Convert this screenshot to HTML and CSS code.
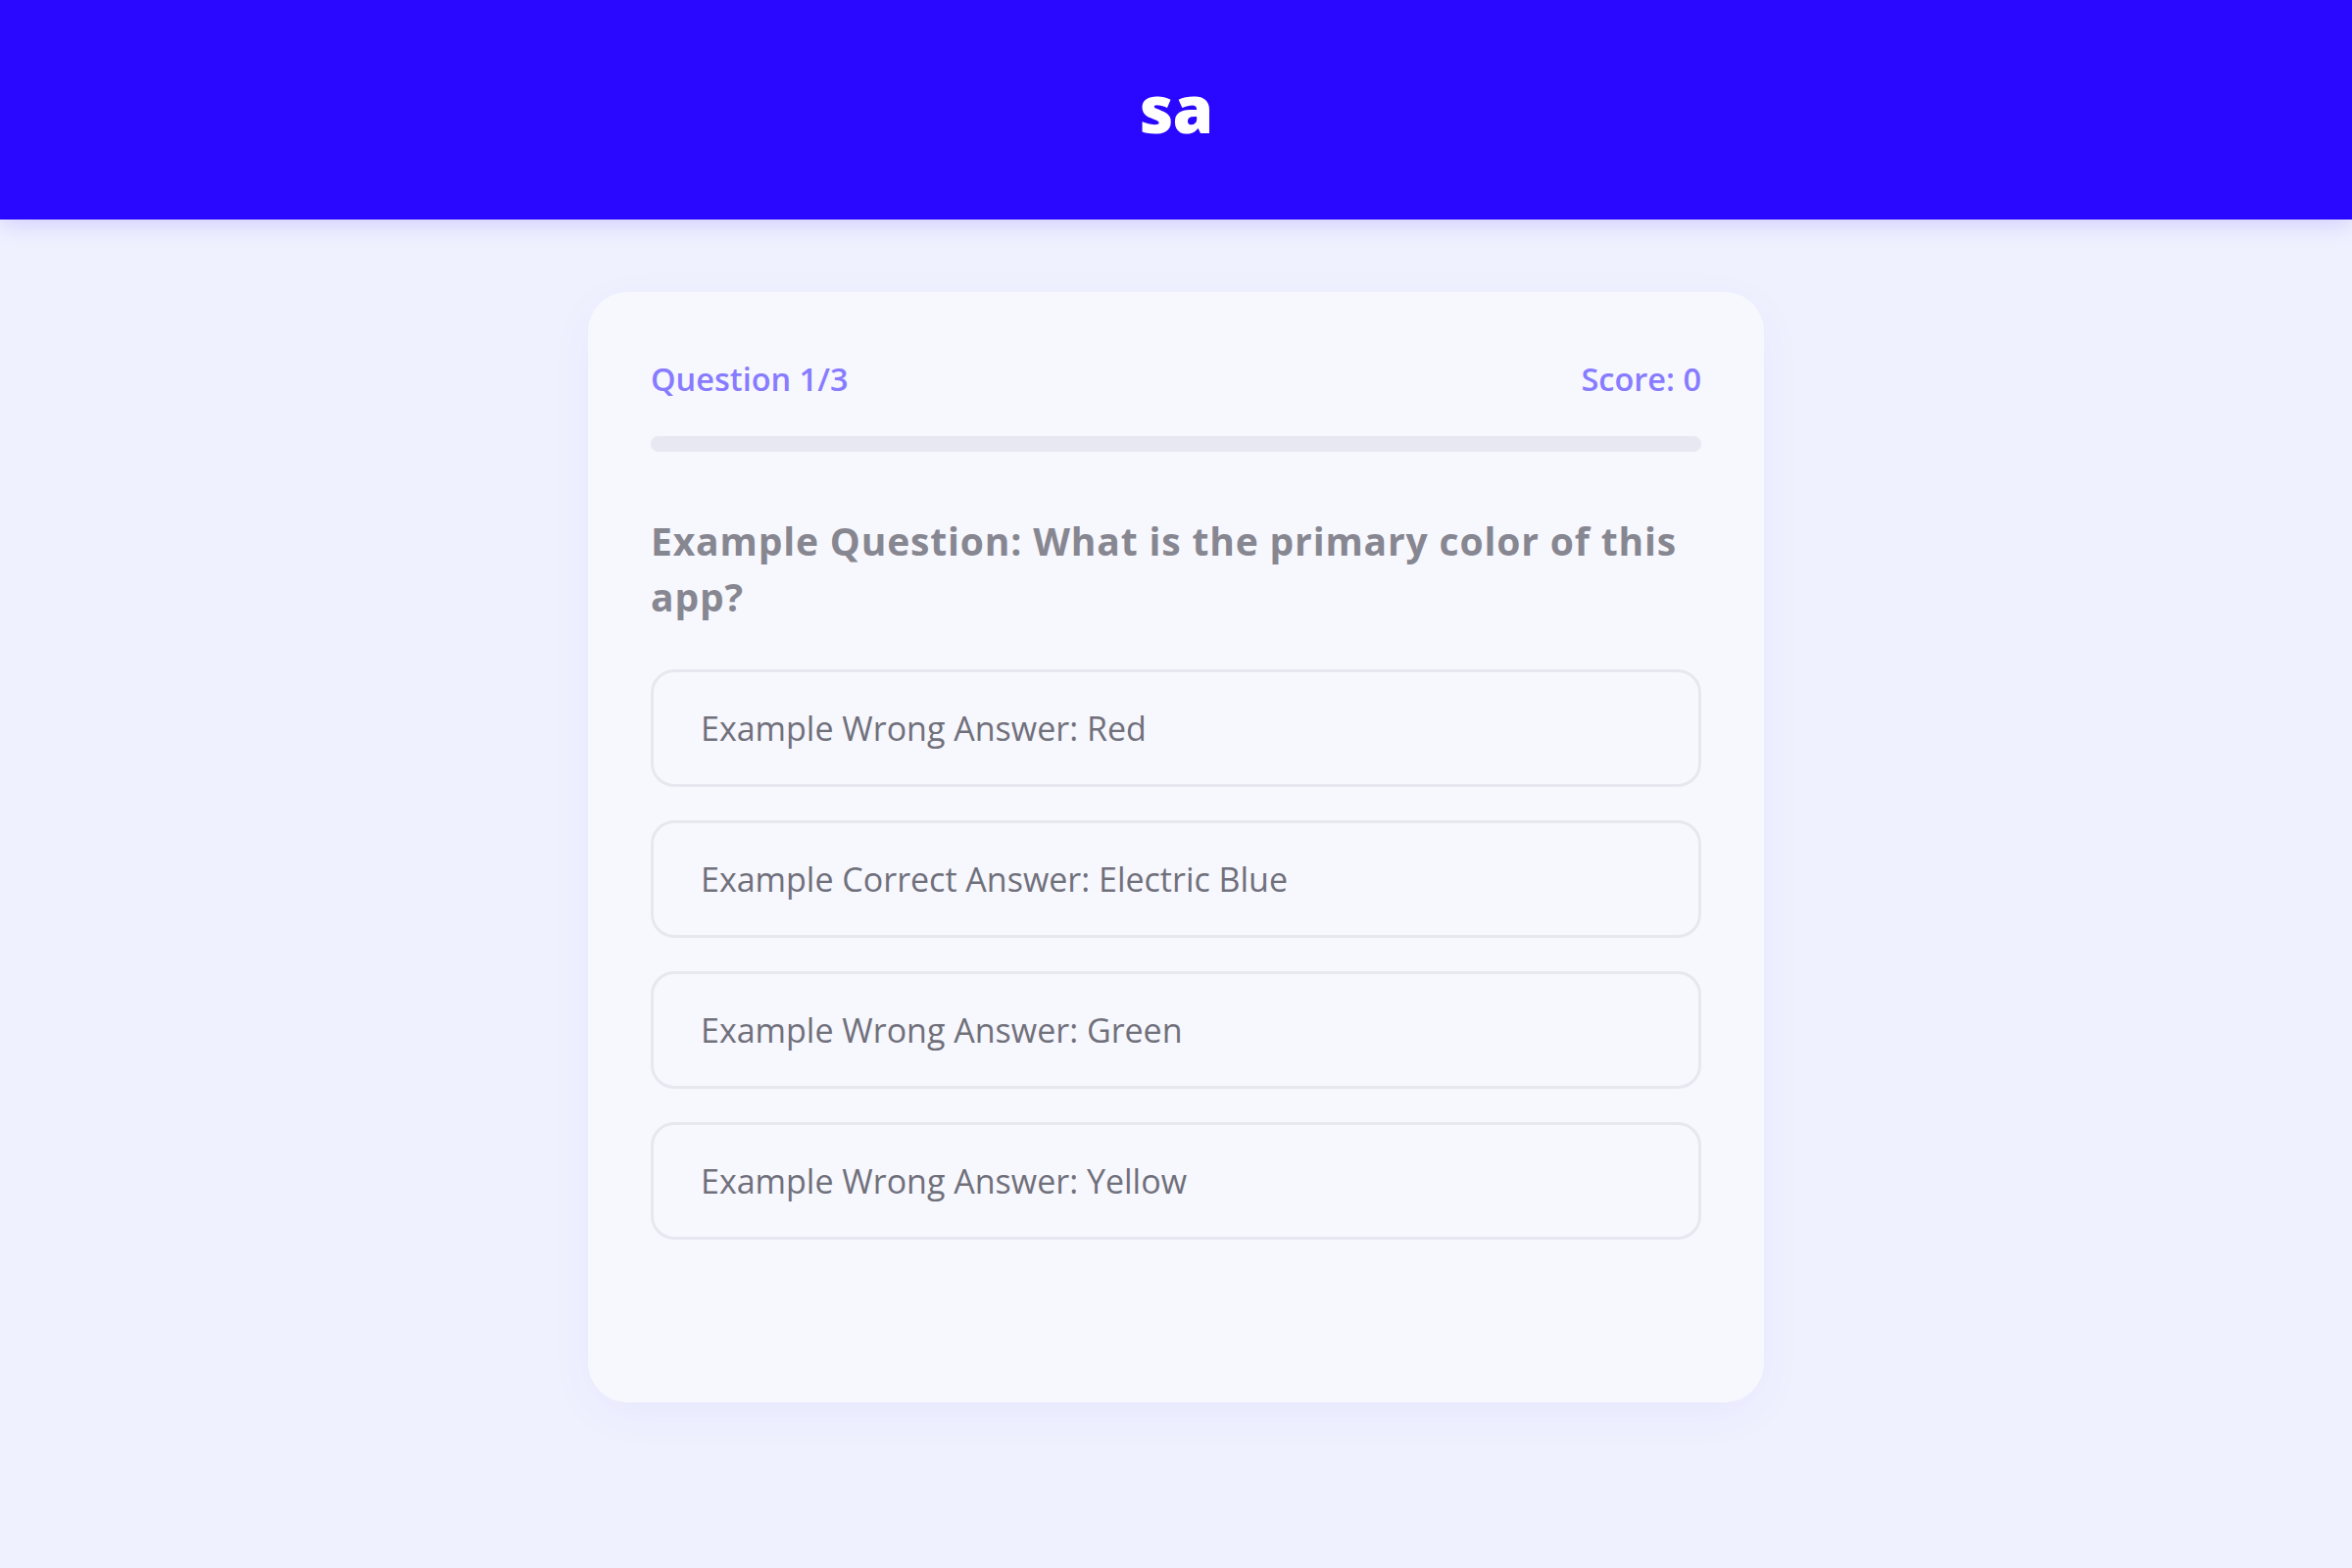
FILE: index.html
```html
<!DOCTYPE html>
<html lang="en">
<head>
<meta charset="utf-8">
<title>sa</title>
<link rel="stylesheet" href="styles.css">
</head>
<body>
<header class="topbar">
  <div class="logo">sa</div>
</header>
<main class="page">
  <section class="quiz-card">
    <div class="quiz-meta">
      <span class="meta-item">Question 1/3</span>
      <span class="meta-item">Score: 0</span>
    </div>
    <div class="progress"><div class="progress-fill" style="width: 0%"></div></div>
    <h2 class="question">Example Question: What is the primary color of this app?</h2>
    <div class="answers">
      <button class="answer">Example Wrong Answer: Red</button>
      <button class="answer">Example Correct Answer: Electric Blue</button>
      <button class="answer">Example Wrong Answer: Green</button>
      <button class="answer">Example Wrong Answer: Yellow</button>
    </div>
  </section>
</main>
</body>
</html>
```

FILE: styles.css
```css
* {
  box-sizing: border-box;
}

html, body {
  margin: 0;
  padding: 0;
}

body {
  background: #f0f1fe;
  font-family: "Open Sans", "Noto Sans", sans-serif;
  min-height: 1600px;
}

.topbar {
  height: 224px;
  background: #2a07ff;
  display: flex;
  align-items: center;
  justify-content: center;
  box-shadow: 0 4px 24px rgba(42, 7, 255, 0.16);
  position: relative;
  z-index: 1;
}

.logo {
  color: #ffffff;
  font-family: "Open Sans", sans-serif;
  font-weight: 800;
  font-size: 67px;
  line-height: 1;
  letter-spacing: -1px;
  padding-bottom: 4px;
}

.page {
  padding-top: 74px;
  display: flex;
  justify-content: center;
}

.quiz-card {
  width: 1200px;
  background: #f7f7fe;
  border-radius: 40px;
  padding: 64px 64px 166px;
  box-shadow: 0 12px 48px rgba(42, 7, 255, 0.045);
}

.quiz-meta {
  display: flex;
  justify-content: space-between;
  align-items: center;
}

.meta-item {
  color: #877bff;
  font-weight: 600;
  font-size: 32.5px;
  line-height: 49px;
}

.progress {
  margin-top: 34px;
  height: 16px;
  border-radius: 8px;
  background: #e8e8f2;
  overflow: hidden;
}

.progress-fill {
  height: 100%;
  background: #2a07ff;
}

.question {
  margin: 62px 0 0;
  color: #878791;
  font-weight: 700;
  font-size: 39px;
  letter-spacing: 0.85px;
  line-height: 57px;
}

.answers {
  margin-top: 46px;
  display: flex;
  flex-direction: column;
  gap: 34px;
}

.answer {
  display: block;
  width: 100%;
  height: 120px;
  text-align: left;
  background: #f7f7fe;
  border: 3px solid #e7e7f0;
  border-radius: 24px;
  padding: 0 48px;
  font-family: "Open Sans", "Noto Sans", sans-serif;
  font-weight: 400;
  font-size: 34px;
  line-height: 50px;
  color: #70707b;
  cursor: pointer;
}
```
